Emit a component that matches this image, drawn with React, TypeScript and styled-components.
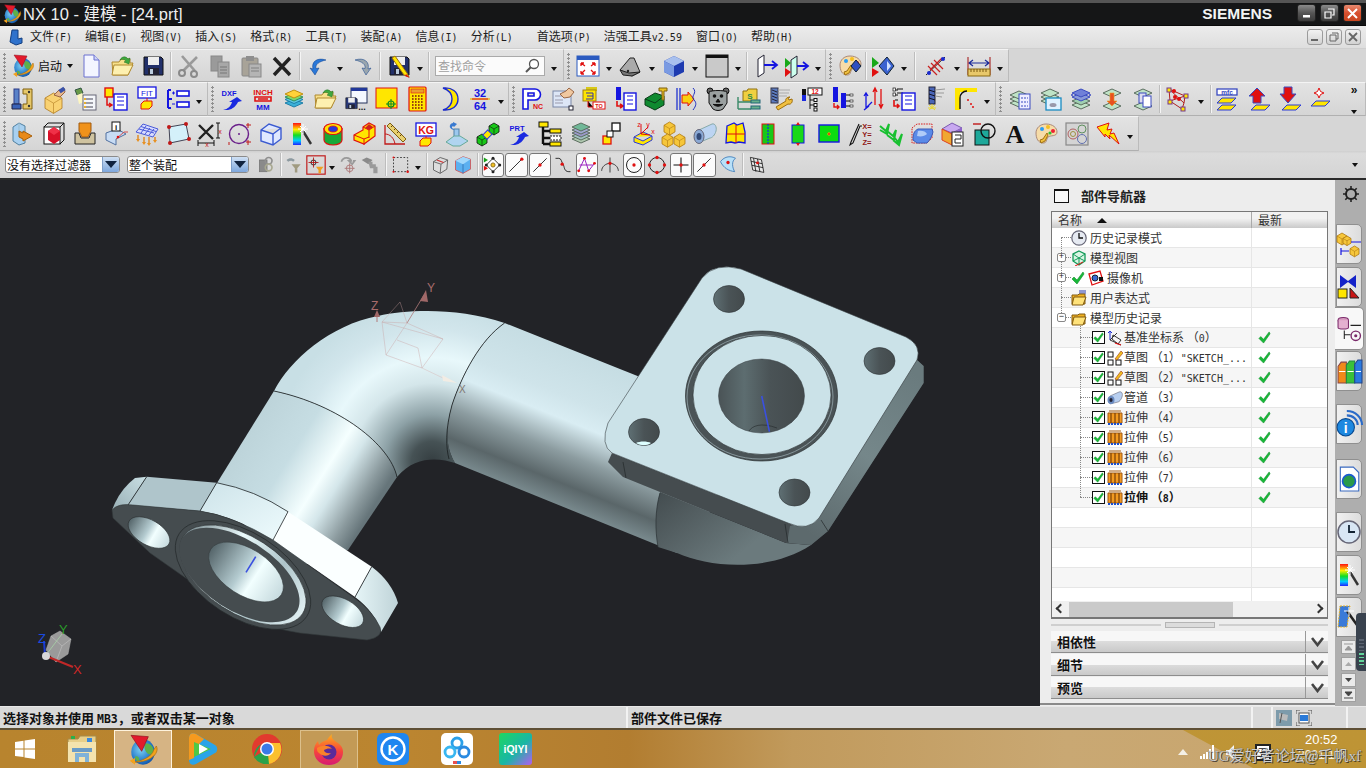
import React from 'react';
import styled, { createGlobalStyle } from 'styled-components';

const Global = createGlobalStyle`
  html, body { margin: 0; padding: 0; width: 1366px; height: 768px; overflow: hidden; background: #d8d8d8; }
  * { box-sizing: border-box; }
  #root { width: 1366px; height: 768px; }
`;
const CJK = `"Noto Sans CJK SC", "Liberation Sans", sans-serif`;

const Page = styled.div`
  width: 1366px; height: 768px; display: flex; flex-direction: column;
  font-family: ${CJK}; font-size: 12px; color: #222; overflow: hidden;
`;
/* ---------- title + menu ---------- */
const TitleBar = styled.header`
  height: 26px; flex: none; background: #151617; border-top: 3px solid #555;
  border-bottom: 1px solid #0a0a0a; display: flex; align-items: center; color: #eee; padding-left: 2px; position: relative;
`;
const TitleText = styled.span`
  font-family: "Liberation Sans", ${CJK}; font-size: 16.5px; margin-left: 1px; line-height: 22px; white-space: nowrap;
`;
const Siemens = styled.span`
  margin-left: auto; margin-right: 25px; font-family: "Liberation Sans", sans-serif; font-weight: 700; font-size: 15.5px;
  letter-spacing: 0; color: #f2f4f4;
`;
const WinBtn = styled.div<{ $red?: boolean }>`
  width: 19px; height: 18px; margin-right: 4px; margin-top: -2px; border-radius: 3px; border: 1px solid #222;
  background: ${p => p.$red ? 'linear-gradient(#e88a70,#d8502f 50%,#c9461f)' : 'linear-gradient(#8a8a8a,#555 50%,#3b3b3b)'};
  display: flex; align-items: center; justify-content: center;
`;
const MenuBar = styled.nav`
  height: 23px; flex: none; background: linear-gradient(#ececec,#dedede); display: flex; align-items: center;
  position: relative; padding-left: 30px; gap: 13px; border-bottom: 1px solid #cfcfcf;
`;
const MenuIconSlot = styled.span`
  position: absolute; left: 8px; top: 3px; display: flex;
`;
const MenuItem = styled.span<{ $after?: number }>`
  font-size: 12px; color: #1d1d1d; white-space: nowrap; margin-right: ${p => p.$after || 0}px; line-height: 20px;
`;
const Mono = styled.span`
  font-family: "DejaVu Sans Mono", "Liberation Mono", monospace; font-size: 10px;
`;
const StatusMono = styled.span`
  font-family: "DejaVu Sans Mono", "Liberation Mono", monospace; font-size: 11.5px;
`;
const DocBtns = styled.div`
  margin-left: auto; display: flex; gap: 3px; padding-right: 5px;
`;
const DocBtn = styled.div`
  width: 16px; height: 16px; border: 1px solid #9b9b9b; border-radius: 3px; background: linear-gradient(#f2f2f2,#d2d2d2);
  display: flex; align-items: center; justify-content: center;
`;
/* ---------- toolbars ---------- */
const ToolRow = styled.div<{ $h: number }>`
  height: ${p => p.$h}px; flex: none; display: flex; background: #d6d6d6;
`;
const Panel = styled.div<{ $grow?: boolean }>`
  display: flex; align-items: center; background: linear-gradient(#e3e3e3,#d5d5d5);
  border-top: 1px solid #f4f4f4; border-bottom: 1px solid #b0b0b0; border-right: 1px solid #bbb;
  flex: ${p => p.$grow ? 1 : 'none'};
`;
const Grip = styled.span<{ $w: number }>`
  width: ${p => p.$w}px; height: 26px; flex: none; margin-left: 0;
  background: radial-gradient(circle at 1.5px 1.5px, #8f8f8f 1px, transparent 1.2px) 3px 0 / 3px 4px repeat-y;
`;
const Cell = styled.span<{ $w: number }>`
  width: ${p => p.$w}px; height: 26px; flex: none; display: flex; align-items: center; justify-content: center;
`;
const BoxCell = styled(Cell)`
  height: 24px; margin: 0 .5px; width: ${p => p.$w - 1}px; background: #fbfbfb; border: 1px solid #777; border-radius: 3px;
`;
const Caret = styled.span<{ $w: number; $up?: number }>`
  width: ${p => p.$w}px; flex: none; display: flex; justify-content: center; align-self: center; position: relative; top: ${p => p.$up || 0}px;
  &::after { content: ''; border-left: 3.5px solid transparent; border-right: 3.5px solid transparent; border-top: 4px solid #111; }
`;
const Sep = styled.span<{ $w: number }>`
  width: ${p => p.$w}px; height: 28px; flex: none; display: flex; justify-content: center;
  &::after { content: ''; width: 2px; height: 100%; background: linear-gradient(90deg,#bdbdbd 50%,#f5f5f5 50%); }
`;
const StartLabel = styled.span`
  width: 27px; flex: none; font-size: 12px; color: #111; white-space: nowrap;
`;
const SearchBox = styled.div`
  width: 110px; height: 20px; margin: 0 3px; flex: none; background: #fbfbfb; border: 1px solid #aaa;
  display: flex; align-items: center; justify-content: space-between; padding: 0 4px 0 2px; color: #a0a0a0; font-size: 12px;
`;
const Overflow = styled.div`
  margin-left: auto; width: 22px; height: 30px; display: flex; flex-direction: column; align-items: center; justify-content: space-between;
  font-family: "Liberation Sans", sans-serif; font-weight: 700; font-size: 12px; line-height: 12px; color: #111;
`;
const SelBar = styled.div`
  height: 29px; flex: none; background: linear-gradient(#cfcfcf,#dcdcdc 10%,#d4d4d4); border-bottom: 2px solid #2a2a2a;
  display: flex; align-items: center; padding-left: 5px;
  ${Sep} { height: 23px; }
`;
const Drop = styled.div<{ $w: number }>`
  width: ${p => p.$w}px; height: 17px; flex: none; background: #fff; border: 1px solid #8b8b8b; border-radius: 3px;
  margin-right: 7px; display: flex; align-items: center; justify-content: space-between; font-size: 12px; color: #111; padding-left: 1px; overflow: hidden; white-space: nowrap;
`;
const DropArrow = styled.span`
  width: 17px; height: 15px; background: linear-gradient(#cfe0f4,#7ea7dc); border-left: 1px solid #7f9fc8; display: flex; align-items: center; justify-content: center;
  &::after { content: ''; border-left: 6px solid transparent; border-right: 6px solid transparent; border-top: 7px solid #10233f; }
`;
const SelEnd = styled.span`
  margin-left: auto; width: 14px; margin-right: 0; display: flex;
  &::after { content: ''; border-left: 3.5px solid transparent; border-right: 3.5px solid transparent; border-top: 4px solid #111; }
`;
/* ---------- main ---------- */
const Main = styled.main`
  height: 526px; flex: none; display: flex; background: #ededed;
`;
const Canvas = styled.section`
  width: 1040px; height: 526px; flex: none; background: #222327; overflow: hidden; display: flex;
`;
const SidePanel = styled.aside`
  width: 295px; flex: none; padding: 0 7px 0 11px; display: flex; flex-direction: column; background: #ededed; border-bottom: 2px solid #8a8a8a; margin-bottom: 1px;
`;
const PanelHead = styled.div`
  height: 31px; flex: none; display: flex; align-items: center; padding-left: 3px; font-weight: 700; font-size: 13px; color: #222;
  &::before { content: ''; width: 13px; height: 11px; border: 1.5px solid #111; border-top-width: 2px; background: #f8f8f8; margin-right: 12px; }
`;
const Table = styled.div`
  height: 408px; flex: none; border: 1px solid #777; border-bottom-width: 2px; display: flex; flex-direction: column; background: #fff; overflow: hidden;
`;
const THead = styled.div`
  height: 16px; flex: none; display: flex; background: linear-gradient(#f2f2f2 40%,#c9c9c9); font-size: 12px; color: #333; line-height: 16px;
`;
const ThName = styled.div`
  width: 200px; flex: none; padding-left: 6px; display: flex; align-items: center; border-right: 1px solid #aaa;
  &::after { content: ''; margin-left: 15px; border-left: 5px solid transparent; border-right: 5px solid transparent; border-bottom: 5px solid #111; }
`;
const ThLast = styled.div`
  padding-left: 6px;
`;
const Rows = styled.div`
  height: 373px; flex: none; overflow: hidden;
`;
const Row = styled.div<{ $alt: boolean }>`
  height: 20px; display: flex; background: ${p => p.$alt ? '#f6f6f6' : '#fff'}; border-bottom: 1px solid #e6e6e6;
`;
const NameCell = styled.div<{ $lvl: number }>`
  width: 200px; flex: none; border-right: 1px solid #e6e6e6; display: flex; align-items: center; gap: ${p => p.$lvl === 1 ? 1.5 : 3}px; position: relative;
  padding-left: ${p => p.$lvl === 1 ? 40 : 19}px; white-space: nowrap; color: #333; font-size: 12px; line-height: 19px;
`;
const VLine = styled.span<{ $l: number; $t: number; $b: number }>`
  position: absolute; left: ${p => p.$l}px; top: ${p => p.$t}px; bottom: ${p => p.$b}px; border-left: 1px dotted #888;
`;
const HLine = styled.span<{ $l: number; $w: number }>`
  position: absolute; left: ${p => p.$l}px; top: 9px; width: ${p => p.$w}px; border-top: 1px dotted #888;
`;
const Expander = styled.span`
  position: absolute; left: 5px; top: 5px; width: 9px; height: 9px; border: 1px solid #888; border-radius: 2px; background: #fff;
  display: flex; align-items: center; justify-content: center; font: 400 9px/7px "Liberation Mono", monospace; color: #222;
`;
const LatestCell = styled.div`
  padding-left: 6px; display: flex; align-items: center;
`;
const RowText = styled.span<{ $bold?: boolean }>`
  font-weight: ${p => p.$bold ? 700 : 400}; color: ${p => p.$bold ? '#111' : '#333'};
`;
const HScroll = styled.div`
  height: 16px; flex: none; display: flex; align-items: center; background: #f0f0f0; padding-left: 17px; position: relative;
`;
const ScrollThumb = styled.div`
  width: 164px; height: 15px; background: #cacaca;
`;
const ScrollArrow = styled.span<{ $side: 'l' | 'r' }>`
  position: absolute; ${p => p.$side === 'l' ? 'left: 5px;' : 'right: 5px;'} top: 4px; width: 7px; height: 7px;
  border-left: 2px solid #333; border-bottom: 2px solid #333; transform: rotate(${p => p.$side === 'l' ? 45 : 225}deg);
`;
const Sash = styled.div`
  height: 11px; flex: none; display: flex; align-items: center; justify-content: center; gap: 4px;
  &::before, &::after { content: ''; flex: 1; height: 2px; background: #cfcfcf; }
`;
const SashHandle = styled.span`
  width: 50px; height: 6px; background: #dcdcdc; border: 1px solid #b5b5b5;
`;
const Accordion = styled.div`
  display: flex; flex-direction: column; gap: 1px; margin-top: 1px;
`;
const AccBar = styled.div`
  height: 22px; display: flex; align-items: center; justify-content: space-between; padding-left: 6px; font-weight: 700; font-size: 13px; color: #111;
  background: linear-gradient(#f7f7f7 50%,#dcdcdc 50%,#c9c9c9); border-bottom: 1px solid #8d8d8d; text-shadow: 0 0 1px #fff;
`;
const AccChevron = styled.span`
  width: 23px; height: 100%; border-left: 1px solid #999; display: flex; align-items: center; justify-content: center;
`;
const TabRail = styled.div`
  width: 31px; flex: none; background: #aeaeae; display: flex; flex-direction: column; align-items: flex-start; padding-left: 1px; position: relative; border-bottom: 2px solid #aeaeae;
`;
const GearSlot = styled.div`
  height: 27px; width: 30px; margin-top: 0; display: flex; align-items: center; justify-content: center;
`;
const Tab = styled.div<{ $top: number; $active?: boolean; $h?: number }>`
  width: ${p => p.$active ? 29 : 26}px; height: ${p => p.$h || 40}px; margin-top: ${p => p.$top}px; flex: none;
  background: ${p => p.$active ? '#f8f8f8' : 'linear-gradient(90deg,#f0f0f0,#dcdcdc)'};
  border: 1px solid #8f8f8f; border-left: ${p => p.$active ? 'none' : '1px solid #8f8f8f'}; border-radius: 0 5px 5px 0;
  display: flex; align-items: center; justify-content: center; margin-left: ${p => p.$active ? -1 : 0}px;
`;
const RailBtn = styled.div<{ $top: number }>`
  width: 15px; height: 14px; margin-left: 5px; margin-top: ${p => p.$top}px; background: #eaeaea; border: 1px solid #a0a0a0; flex: none;
  display: flex; align-items: center; justify-content: center;
`;
const Meter = styled.div`
  position: absolute; right: 0; top: 433px; width: 10px; height: 58px; background: #39424e; border-radius: 4px 0 0 4px;
  display: flex; flex-direction: column; justify-content: flex-end; gap: 2px; padding: 0 2px 6px 3px;
`;
const MeterTick = styled.span<{ $on: boolean }>`
  height: 1.5px; background: ${p => p.$on ? '#63d49b' : '#5a6370'};
`;
/* ---------- status / taskbar ---------- */
const StatusBar = styled.footer`
  height: 22px; flex: none; background: #d9d9d9; border-top: 1px solid #e8e8e8; display: flex; align-items: center; font-size: 13px; font-weight: 700; color: #111;
`;
const StatusCell = styled.div<{ $w: number; $line?: boolean }>`
  width: ${p => p.$w}px; height: 100%; flex: none; display: flex; align-items: center; gap: 4px; padding-left: 3px;
  border-right: ${p => p.$line ? '2px solid #f2f2f2' : 'none'}; white-space: pre;
`;
const StatusMsg = styled.span`
  white-space: pre;
`;
const Taskbar = styled.div`
  height: 40px; flex: none; display: flex; position: relative; border-top: 2px solid #5e4f35;
  background: linear-gradient(90deg,#b8842e 0,#bb8530 30%,#b27d30 46%,#c19a5c 58%,#c9a873 78%,#c8a56c 100%);
  &::after { content: ''; position: absolute; inset: 0; background: linear-gradient(90deg,#c19a3e,#be9435);
    clip-path: polygon(1183px 0,100% 0,100% 100%,1253px 100%); }
`;
const TaskCell = styled.div<{ $w: number; $on?: 'a' | 'b' }>`
  width: ${p => p.$w}px; flex: none; display: flex; align-items: center; justify-content: center; position: relative; z-index: 1;
  ${p => p.$on === 'a' ? 'background:#d6b484;border:1px solid #fff3dd;border-bottom:none;' : ''}
  ${p => p.$on === 'b' ? 'background:#c39a56;border:1px solid #dcc08c;border-bottom:none;' : ''}
`;
const Tray = styled.div`
  margin-left: auto; width: 190px; position: relative; z-index: 2; display: flex; align-items: center; gap: 10px; padding-left: 2px; padding-top: 6px;
`;
const Clock = styled.div`
  position: absolute; left: 129px; top: 2px; color: #fff; font: 13px/15px "Liberation Sans", sans-serif; white-space: nowrap;
`;
const DateText = styled.div`
  position: absolute; left: 122px; top: 18px; color: #f4f0e0; font: 12px/15px "Liberation Sans", sans-serif; white-space: nowrap;
`;
const Watermark = styled.div`
  position: absolute; left: 32px; top: 16px; color: rgba(235,235,235,.85); font: 15px/20px "Liberation Serif", "Noto Sans CJK SC", serif; white-space: nowrap;
  text-shadow: 0 0 1px #333, 1px 1px 0 rgba(40,40,40,.75);
`;
const ImeBox = styled.span`
  width: 16px; height: 17px; background: #fff; border: 2px solid #222; font-size: 11px; line-height: 13px; text-align: center; color: #111; margin-left: 9px;
`;
const ToolSvg = styled.svg<{ $s: number }>`
  width: ${p => p.$s}px; height: ${p => p.$s}px; flex: none; display: block; overflow: visible;
`;
const T: React.FC<{ x: number; y: number; s: number; f: string; w?: number; a?: 'start' | 'middle'; children: React.ReactNode }> = ({ x, y, s, f, w = 700, a = 'middle', children }) => (
  <text x={x} y={y} fontSize={s} fill={f} fontWeight={w} textAnchor={a} fontFamily='"Liberation Sans",sans-serif'>{children}</text>
);

/* ---------- icon pieces ---------- */
const B = '#1515e0', R = '#e01010', Y = '#ffe600', G = '#10c010';
const Fold = (
  <><path d="M2 8h7l2-3h9v4h3l-5 12H3z" fill="#f7e08a" stroke="#b08a30" /><path d="M4 11h19l-5 10H2z" fill="#fdf0b0" stroke="#b08a30" /></>
);
const Floppy = (f = '#22306a') => (
  <><path d="M3 3h17l2 2v16H3z" fill={f} stroke="#111" /><rect x="7" y="3" width="11" height="8" fill="#eee" /><rect x="7" y="14" width="11" height="7" fill="#223" /><rect x="9" y="15" width="3" height="5" fill="#bcd" /></>
);
const Lyr = (y: number, f = '#bfe3c6', st = '#5c6e60') => <path d={`M12 ${y}l9 4-9 4-9-4z`} fill={f} stroke={st} />;
const ListBox = (x: number, y: number, w = 12, h = 14) => (
  <><rect x={x} y={y} width={w} height={h} fill="#fff" stroke={B} strokeWidth="1.4" /><path d={`M${x + 3} ${y + 3}h${w - 6}M${x + 3} ${y + 7}h${w - 6}M${x + 3} ${y + 11}h${w - 6}`} stroke={B} /></>
);
const Para = (x: number, y: number) => <path d={`M${x + 5} ${y}h14l-5 5h-14z`} fill={Y} stroke="#2a3ad8" />;
const Cube = (x: number, y: number, s: number, c = '#f6c63a', st = '#b07a10') => (
  <><path d={`M${x} ${y + s * .3}l${s * .5} -${s * .3} ${s * .5} ${s * .3} v${s * .6} l-${s * .5} ${s * .3} -${s * .5} -${s * .3}z`} fill={c} stroke={st} strokeWidth=".8" /><path d={`M${x} ${y + s * .3}l${s * .5} ${s * .3} ${s * .5} -${s * .3}M${x + s * .5} ${y + s * .6}v${s * .6}`} stroke={st} strokeWidth=".6" fill="none" /></>
);
const Wand = (
  <><defs><linearGradient id="rb" x1="0" y1="0" x2="0" y2="1"><stop offset="0" stopColor="#f11" /><stop offset=".3" stopColor="#fe0" /><stop offset=".55" stopColor="#1d2" /><stop offset=".8" stopColor="#0cf" /><stop offset="1" stopColor="#22f" /></linearGradient></defs><rect x="3" y="1" width="8" height="22" fill="url(#rb)" /><path d="M13 9l8 13" stroke="#333" strokeWidth="2.4" /><path d="M13 2v10M8 7h10M10 4l6 6M16 4l-6 6" stroke="#fff" strokeWidth="1" /></>
);
const Palette = (
  <><path d="M12 2c7 0 11 4 11 8 0 5-7 3-9 5-2 3-1 6-5 6-5 0-7-5-7-10C2 6 6 2 12 2z" fill="#f6dca8" stroke="#a87" /><circle cx="8" cy="7" r="2" fill="#2a9df4" /><circle cx="14" cy="5" r="2" fill="#f6c020" /><circle cx="19" cy="9" r="2" fill="#e23" /><circle cx="16" cy="11" r="1.6" fill="#3b3" /><path d="M13 11l-4 6-3 1 1 3 4-2 3-6z" fill="#f0c040" stroke="#a07010" /></>
);
const Globe = (
  <><defs><radialGradient id="gb" cx=".4" cy=".4" r=".7"><stop offset="0" stopColor="#7fd2f2" /><stop offset=".7" stopColor="#1f74c8" /><stop offset="1" stopColor="#124a9a" /></radialGradient></defs><ellipse cx="12" cy="13.5" rx="8.8" ry="9.5" fill="url(#gb)" /><path d="M14 7c4 0 6 3 6 6s-2 3-4 2-4-5-2-8zM6 17c2-1 4 1 3 4-2-1-3-2-3-4z" fill="#5db04a" /><path d="M3 1l13 1-5 11z" fill="#e21a2c" stroke="#8c0f1c" strokeWidth=".5" /><path d="M22 9c3 6-6 13-18 12 6 0 15-4 16-9z" fill="#f2a21c" stroke="#a86a10" strokeWidth=".5" /><path d="M2 20l4-2v5z" fill="#f2a21c" /></>
);
const Wing = (c = '#1a6ad0') => <path d="M19 6C10 3 4 8 6 15l-3-1 5 7 4-7-3 .5c-1-4 3-7 10-8.500z" fill={c} stroke="#0c3d88" strokeWidth=".5" />;

const ICONS: Record<string, React.ReactNode> = {
  logo: Globe,
  new: <><path d="M5 1h10l5 5v17H5z" fill="#f3f5ff" stroke="#6a70d0" /><path d="M15 1v5h5" fill="#cdd3f6" stroke="#6a70d0" /></>,
  open: <>{Fold}<path d="M10 6c2-4 6-4 8-1l2-1-1 6-5-2 2-1c-2-2-4-2-6-1z" fill="#3fa83f" stroke="#1e6e1e" strokeWidth=".5" /></>,
  save: Floppy(),
  cut: <><path d="M6 17L20 3M18 17L5 2" stroke="#9a9a9a" strokeWidth="2.6" /><circle cx="5" cy="19" r="3" fill="none" stroke="#8a8a8a" strokeWidth="2" /><circle cx="17" cy="20" r="3" fill="none" stroke="#8a8a8a" strokeWidth="2" /></>,
  copy: <><rect x="3" y="2" width="11" height="15" fill="#9a9a9a" stroke="#888" /><rect x="10" y="8" width="11" height="15" fill="#a8a8a8" stroke="#888" /><path d="M12 13h7M12 16h7M12 19h7" stroke="#777" /></>,
  paste: <><rect x="3" y="4" width="16" height="18" rx="1" fill="#a8a398" stroke="#888" /><rect x="7" y="2" width="8" height="5" fill="#8e8e8e" /><rect x="10" y="10" width="12" height="13" fill="#b4b4b4" stroke="#888" /><path d="M12 14h8M12 17h8" stroke="#808080" /></>,
  del: <path d="M4 4l16 17M20 4L4 21" stroke="#222" strokeWidth="3.4" />,
  undo: Wing('#2a78d8'),
  redo: <g transform="matrix(-1 0 0 1 24 0)">{Wing('#9aa6ae')}</g>,
  savePen: <>{Floppy()}<path d="M8 2l12 17 2 4-5-2L5 4z" fill={Y} stroke="#a07010" /><path d="M19 20l4 4-5-2z" fill="#e01010" /></>,
  fit: <><rect x="1" y="2" width="22" height="20" fill="#fff" stroke="#2a5ac0" /><rect x="1" y="2" width="22" height="4" fill="#2a5ac0" /><path d="M5 9l4 3M5 9v3M5 9h3M19 9l-4 3M19 9v3M19 9h-3M5 20l4-4M5 20v-3M5 20h3M19 20l-4-4M19 20v-3M19 20h-3" stroke={R} strokeWidth="1.3" fill="none" /></>,
  shape: <><path d="M2 16l10-12h4l6 14-8 4z" fill="#aaa" stroke="#222" /><path d="M2 16l9 3 11-1-8 4-9-1z" fill="#777" stroke="#222" /><circle cx="10" cy="17" r="1.2" fill="#222" /></>,
  cube: <><path d="M2 7l10-5 10 5v11l-10 5-10-5z" fill="#1e3bb0" /><path d="M2 7l10-5 10 5-10 5z" fill="#a8c0ee" /><path d="M2 7l10 5v11l-10-5z" fill="#7a9ae2" /></>,
  square: <><rect x="1" y="1" width="22" height="22" fill="#c9c9c9" stroke="#111" /><rect x="1" y="1" width="22" height="3" fill="#111" /></>,
  slab: <><path d="M4 5l6-4v18l-6 4z" fill="#fff" stroke="#223" /><path d="M10 11h12M18 7l5 4-5 4" stroke={B} strokeWidth="1.8" fill="none" /></>,
  slab2: <><path d="M6 6l6-4v18l-6 4z" fill="#cfe" stroke="#223" /><path d="M0 4l6 5-6 5z" fill="#18a818" /><path d="M0 14l6 4-6 5z" fill={R} /><path d="M12 12h10M18 8l5 4-5 4" stroke={B} strokeWidth="1.8" fill="none" /></>,
  palDia: <>{Palette}<path d="M18 6l5 6-5 6-5-6z" fill="#3050c0" stroke="#123" /></>,
  triDia: <><path d="M1 3l7 6-7 5z" fill="#18a818" /><path d="M1 14l7 4-7 5z" fill={R} /><path d="M16 3l7 9-7 9-8-9z" fill="#3a62d0" stroke="#123" /><path d="M16 7l4 5-4 5z" fill="#cfe0ff" /></>,
  antenna: <><path d="M2 21L21 3" stroke="#222" /><path d="M4 12l9 9M7 9l9 9M10 6l9 9M6 16l12-12" stroke="#c82020" strokeWidth="1.2" /><circle cx="5" cy="19" r="2" fill="#1a2ad0" /><circle cx="19" cy="5" r="2" fill="#1a2ad0" /></>,
  rulerDim: <><path d="M2 9h20M6 6l-4 3 4 3M18 6l4 3-4 3" stroke="#1a2a9a" strokeWidth="1.2" fill="none" /><path d="M1 3v18M23 3v18" stroke="#a01010" /><rect x="1" y="15" width="22" height="7" fill="#e8c86a" stroke="#8a6a10" /><path d="M4 15v3M7 15v3M10 15v3M13 15v3M16 15v3M19 15v3" stroke="#7a5a10" /></>,
  bolt: <><rect x="3" y="2" width="5" height="15" fill="#5a82c8" stroke="#2a3a88" /><path d="M1 17h9v5H1z" fill="#3a62b8" stroke="#224" /><path d="M12 2h9v20h-9v-5h4V7h-4z" fill="#e6c86a" stroke="#806010" /><circle cx="18" cy="5" r="1.2" fill="#333" /><circle cx="18" cy="19" r="1.2" fill="#333" /></>,
  handBox: <>{Cube(3, 6, 17, '#f9d272', '#b07a20')}<path d="M12 8l5-5 3 1 2-3 1 4-5 5z" fill="#e9b98a" stroke="#964" /><rect x="17" y="1" width="6" height="4" fill="#3a52a8" transform="rotate(-35 20 3)" /></>,
  spot: <><path d="M2 3l6-2 2 5-6 2z" fill="#689a48" stroke="#354" /><path d="M4 8l5-2 5 8-8 3z" fill="#fff8c0" opacity=".95" /><rect x="10" y="8" width="13" height="15" fill="#f4f6fa" stroke="#667" /><path d="M13 12h7M13 16h7M13 20h7" stroke="#445" strokeWidth="1.2" /><rect x="11" y="11" width="2" height="2" fill="#e8b030" /><rect x="11" y="15" width="2" height="2" fill="#e8b030" /><rect x="11" y="19" width="2" height="2" fill="#e8b030" /></>,
  redList: <><rect x="1" y="1" width="8" height="9" fill={Y} stroke={R} strokeWidth="1.4" /><path d="M3 10v8h4M5 16l3 2-3 2" stroke={R} strokeWidth="1.5" fill="none" />{ListBox(10, 7, 13, 16)}</>,
  fitBox: <><rect x="3" y="0" width="18" height="11" fill="#fff" stroke={B} strokeWidth="1.3" /><T x={12} y={9} s={8} f={B} w={400}>FIT</T><path d="M12 11v4" stroke={R} /><path d="M6 17l3-3h8v5l-3 3H6z" fill={Y} stroke={R} /></>,
  listPM: <><path d="M2 3v18M2 3h3M2 21h3M2 12h4" stroke={B} strokeWidth="2" /><path d="M6 6h3M7.500 4.500v3M6 17h3" stroke={B} /><rect x="11" y="4" width="12" height="5" fill="#fff" stroke={B} strokeWidth="1.6" /><rect x="11" y="15" width="12" height="5" fill="#fff" stroke={B} strokeWidth="1.6" /></>,
  dxf: <><T x={9} y={9} s={7.500} f={B}>DXF</T><path d="M3 23c5-1 8-4 9-8l-3 0 8-5 5 4-4 1c-2 4-5 7-10 8z" fill="#1a2ae0" /></>,
  inch: <><T x={12} y={7.500} s={8} f={R}>INCH</T><path d="M4 10h16v4H4zM7 12h10" fill="none" stroke={R} strokeWidth="1.6" /><T x={12} y={23} s={8} f={B}>MM</T></>,
  layersY: <>{Lyr(12, '#3ab0d8', '#1e7ea8')}{Lyr(8.500, '#5ec8e0', '#1e7ea8')}{Lyr(6, '#7fd86a', '#2f8f60')}{Lyr(3, '#ffd23a', '#c09010')}</>,
  saveWin: <><rect x="7" y="1" width="16" height="15" fill="#f4f8ff" stroke="#22305a" /><rect x="7" y="1" width="16" height="3" fill="#22389a" /><g transform="translate(0 9) scale(.6)">{Floppy('#2a3a7a')}</g><T x={18} y={23} s={9} f="#111">...</T></>,
  yellowSq: <><rect x="1" y="1" width="21" height="20" fill={Y} stroke={R} /><circle cx="16" cy="17" r="3" fill="none" stroke="#0a8a20" strokeWidth="1.2" /><path d="M16 12v10M11 17h10" stroke="#0a8a20" /></>,
  calc: <><rect x="3" y="0" width="17" height="24" rx="1" fill={Y} stroke={R} strokeWidth="1.2" /><rect x="5" y="2" width="13" height="4" fill="#e8a030" stroke={R} strokeWidth=".6" /><path d="M6 9h11M6 12h11M6 15h11M6 18h11M6 21h11" stroke="#7a1010" strokeWidth="1.5" strokeDasharray="1.6 1.4" /></>,
  moon: <path d="M6 1c6 2 9 6 9 11s-3 9-9 11c9 1 15-4 15-11S15 0 6 1z" fill={Y} stroke="#1a2ad0" strokeWidth="1.4" />,
  frac: <><T x={12} y={9.500} s={11} f={B}>32</T><path d="M2 12h20" stroke="#e8c020" strokeWidth="1.5" /><path d="M4 12h16" stroke={R} /><T x={12} y={23} s={11} f={B}>64</T></>,
  pnc: <><path d="M3 2h12a5 5 0 010 11H8v9H3zM8 6v3h6v-3z" fill="#fff" stroke={B} strokeWidth="1.6" /><T x={18} y={22} s={7} f={R}>NC</T></>,
  handDoc: <><rect x="2" y="4" width="18" height="16" fill="#dde6f6" stroke="#7a88a8" /><path d="M4 9h14M4 13h8M4 16h8" stroke="#99a" /><path d="M9 7l6-3 3-3 5 4-4 5-6 1z" fill="#f0c8a0" stroke="#964" /><rect x="18" y="19" width="4" height="4" fill="#fff" stroke="#223" /></>,
  yellowTo: <><rect x="4" y="0" width="11" height="4" fill="#d8c818" /><rect x="1" y="3" width="13" height="11" fill={Y} stroke="#a08010" /><path d="M4 6h7v6H4M5 9h6" stroke="#33a" fill="none" /><path d="M6 14v6h5" stroke={R} /><rect x="11" y="15" width="12" height="7" fill="#fff" stroke={R} /><T x={17} y={21} s={5.500} f={R}>TO</T></>,
  redBlueList: <><rect x="3" y="0" width="5" height="13" fill={B} /><path d="M4 14v5h5M7 17l3 2-3 2" stroke={R} strokeWidth="1.6" fill="none" />{ListBox(11, 6, 12, 17)}</>,
  greenBlock: <><path d="M1 12l10-6 9 3v9l-9 5-10-5z" fill="#0f8a30" stroke="#0a3a18" /><path d="M1 12l10 4 9-7" stroke="#0a3a18" fill="none" /><path d="M15 1h8v3h-3v9h-2V4h-3z" fill="#e8c020" stroke="#806010" /></>,
  wave: <><path d="M2 1v22M5 1v22" stroke="#3040d0" strokeWidth="1.4" /><path d="M7 8h6V5l6 7-6 7v-3H7z" fill="#f8d010" stroke={R} /><path d="M18 1c5 5-3 8 1 12 3 3 2 6-1 10" stroke="#2030c0" fill="none" /></>,
  bear: <><circle cx="4" cy="4" r="3" fill="#666" stroke="#111" /><circle cx="20" cy="4" r="3" fill="#666" stroke="#111" /><path d="M3 5c3-2 15-2 18 0v11l-4 6c-3 2-7 2-10 0l-4-6z" fill="#9aa0a0" stroke="#111" /><circle cx="8.500" cy="9" r="1.800" fill="#111" /><circle cx="15.500" cy="9" r="1.800" fill="#111" /><path d="M12 12l-2 3h4zM7 17c3 3 7 3 10 0" fill="#111" stroke="#111" /></>,
  folderTree: <><path d="M6 4h4l1-2h9v12H6z" fill="#f0d040" stroke="#907010" /><T x={13} y={12} s={8} f="#2a8a4a">S</T><path d="M1 10v12M1 15h13M1 22h13" stroke="#3a8a68" strokeWidth="1.4" /><rect x="14" y="13" width="9" height="3" fill="#66b08a" stroke="#267" /><rect x="14" y="19" width="9" height="3" fill="#66b08a" stroke="#267" /></>,
  wrench: <><rect x="3" y="1" width="7" height="15" fill="#5c7cc0" stroke="#334" /><path d="M4 3l5 2M4 6l5 2M4 9l5 2M4 12l5 2" stroke="#223" /><path d="M10 3h12M10 6h11M10 9h9" stroke="#aaa" /><path d="M22 10c-3 0-5 2-4 4l-10 6 2 3 10-6c3 1 5-2 4-5l-3 1-1-2z" fill="#f0c040" stroke="#a07010" /></>,
  tree12: <><rect x="3" y="2" width="4" height="12" fill="#111" /><rect x="3" y="8" width="4" height="6" fill="#1c2ae0" /><rect x="9" y="1" width="14" height="7" fill="#fff" stroke="#111" /><T x={16} y={7} s={6.500} f={R}>12</T><path d="M11 8v14M11 13h4M11 18h4" stroke="#111" /><rect x="15" y="11.500" width="3" height="3" fill="#fff" stroke="#111" /><rect x="15" y="16.500" width="3" height="3" fill="#fff" stroke="#111" /><rect x="15" y="21" width="3" height="3" fill="#fff" stroke="#111" /></>,
  blueBars: <><rect x="3" y="0" width="5" height="15" fill={B} /><rect x="11" y="6" width="5" height="15" fill={B} /><path d="M4 16v4h5M7 18l2 2-2 2" stroke={R} strokeWidth="1.400" fill="none" /><path d="M16 8h4M16 14h4M16 19h4" stroke="#111" /><rect x="20" y="7" width="3" height="2" fill="#fff" stroke="#111" strokeWidth=".6" /><rect x="20" y="13" width="3" height="2" fill="#fff" stroke="#111" strokeWidth=".6" /><rect x="20" y="18" width="3" height="2" fill="#fff" stroke="#111" strokeWidth=".6" /></>,
  xyArrows: <><path d="M5 21V7M3 9l2-3 2 3M5 21l6-6M3 23l5-4" stroke={B} strokeWidth="1.300" fill="none" /><path d="M14 2v16M12 5l2-4 2 4M20 2v18M18 17l2 4 2-4" stroke={R} strokeWidth="1.300" fill="none" /></>,
  listRed: <><path d="M3 3h3M3 8h3M3 13h3" stroke="#111" strokeWidth="1" /><rect x="1" y="1" width="2.500" height="3" fill="#fff" stroke="#111" strokeWidth=".7" /><rect x="1" y="6" width="2.500" height="3" fill="#fff" stroke="#111" strokeWidth=".7" /><path d="M5 6h6M5 2h6" stroke="#111" /><path d="M2 13v6h5M5 17l2 2-2 2" stroke={R} strokeWidth="1.600" fill="none" />{ListBox(10, 6, 13, 17)}</>,
  drill: <><rect x="6" y="0" width="6" height="17" fill="#4a66b8" stroke="#223" /><path d="M6 3l6 2M6 7l6 2M6 11l6 2" stroke="#112" /><path d="M12 3l10-1M12 6l9 0M12 9l7 1" stroke="#999" /><path d="M9 17v5M5 21h8M6 18l6 5M12 18l-6 5" stroke="#e8d830" /></>,
  yArc: <><path d="M1 1h22v4H6v18H1z" fill={Y} /><path d="M6 22V11c0-4 3-7 7-7" stroke="#111" strokeWidth="1.4" fill="none" /><circle cx="14" cy="13" r="1" fill={R} /><circle cx="17" cy="17" r="1" fill={R} /><circle cx="19" cy="20" r="1" fill={R} /></>,
  lyrList: <>{Lyr(12)}{Lyr(8)}{Lyr(4)}<rect x="12" y="7" width="11" height="15" fill="#eef" stroke="#3a4ac0" /><path d="M14 11h7M14 15h7M14 19h7" stroke="#3a4ac0" strokeDasharray="2 1" /></>,
  lyrView: <>{Lyr(10)}{Lyr(6)}{Lyr(2)}<rect x="8" y="11" width="15" height="12" fill="#dff2ff" stroke="#1a8ac0" strokeWidth="1.300" /><ellipse cx="15" cy="18" rx="3.500" ry="2" fill="#99a" /></>,
  lyrStack: <>{Lyr(14)}{Lyr(10, '#9fd0b0')}{Lyr(6, '#8a9ad8', '#3a4ac0')}{Lyr(2, '#7080d8', '#3a4ac0')}<circle cx="3" cy="8" r="1" fill="#3a4ac0" /><circle cx="21" cy="8" r="1" fill="#3a4ac0" /></>,
  lyrArrow: <>{Lyr(2)}{Lyr(15)}<path d="M10 6h4v8h3l-5 5-5-5h3z" fill="#e85020" stroke="#e8a020" strokeWidth=".6" /></>,
  lyrDoc: <>{Lyr(2)}{Lyr(15)}<rect x="8" y="6" width="7" height="10" fill="#dde" stroke="#3a4ac0" /><rect x="12" y="9" width="8" height="11" fill="#fff" stroke="#3a4ac0" /></>,
  poly: <><path d="M3 2l15 14-2 6L4 14zM3 2l16 7-1 7M4 14l15-5" stroke="#b02020" fill="none" /><rect x="1" y="1" width="4" height="4" fill={Y} stroke="#74378a" /><rect x="18" y="7" width="4" height="4" fill={Y} stroke="#74378a" /><rect x="2" y="13" width="4" height="4" fill={Y} stroke="#74378a" /><rect x="15" y="20" width="4" height="4" fill={Y} stroke="#74378a" /><circle cx="8" cy="4" r="2" fill={R} /><circle cx="13" cy="12" r="2" fill={R} /><circle cx="9" cy="10" r="2" fill={R} /></>,
  mfc: <><rect x="1" y="2" width="20" height="6" fill="#fff" stroke="#3a4ac0" strokeWidth="1.300" /><T x={11} y={7.500} s={6.500} f="#3a4ac0">mfc</T>{Para(1, 11)}{Para(1, 18)}</>,
  up: <><path d="M10 1l8 8h-4v7H6V9H2z" fill={R} stroke="#3a4ac0" />{Para(4, 18)}</>,
  down: <><path d="M6 0h8v7h4l-8 9-8-9h4z" fill={R} stroke="#3a4ac0" />{Para(4, 18)}</>,
  star: <><path d="M10 1l1.500 3.500L15 6l-3.500 1.500L10 11 8.500 7.500 5 6l3.500-1.500z" fill="#fff" stroke={R} />{Para(2, 14)}</>,
  box: <><path d="M3 5l6-4 6 3v17l-6 2-6-4z" fill="#a8d0f0" stroke="#5080a0" /><path d="M9 1v13l6 4" fill="none" stroke="#9bc" /><path d="M9 9l4 2 0-2 9 5-9 5v-2l-4-2z" fill="#e88a1a" stroke="#a8600a" /></>,
  redCube: <><rect x="2" y="5" width="16" height="17" fill="#fff" stroke="#111" /><path d="M2 5l4-4h16v17l-4 4M18 5l4-4" fill="none" stroke="#111" /><path d="M6 9l6-4 6 4v9l-6 4-6-4z" fill="#d81028" /><path d="M6 9l6 4 6-4-6-4z" fill="#f03048" /></>,
  tray: <><path d="M6 1h12v8l-3 6H9L6 9z" fill="#f0921a" stroke="#a05a10" /><path d="M2 11h4l2 5h8l2-5h4v11H2z" fill="#cfc3a0" stroke="#222" /></>,
  info: <><path d="M2 11l11-4 9 5-10 5v6l-10-5z" fill="#c8dcf4" stroke="#5070a0" /><rect x="8" y="0" width="8" height="9" fill="#fff" stroke="#111" /><T x={12} y={8} s={8} f="#111">i</T><path d="M12 17l8-7h4" stroke="#d05050" fill="none" /><circle cx="14" cy="15" r="1.300" fill={R} /></>,
  net: <><path d="M1 10l7-8 15 5-5 8z" fill="#d8dcff" stroke="#4a5ad8" /><path d="M4 7l15 4M6 4.500l15 5M6 11l5-7M10 12l5-6M14 13l5-6" stroke="#4a5ad8" /><path d="M3 13v5M9 15v6M14 15v7M20 15v4" stroke="#e08010" strokeWidth="1.300" /><path d="M1 17h4l-2 3zM7 20h4l-2 3zM12 21h4l-2 3zM18 18h4l-2 3z" fill="#e89020" /></>,
  plate: <><path d="M3 5l17-3 3 15-19 4z" fill="#d4f0fa" stroke="#445" /><circle cx="3" cy="5" r="2" fill="#c01818" /><circle cx="20" cy="2" r="2" fill="#c01818" /><circle cx="23" cy="17" r="2" fill="#c01818" /><circle cx="4" cy="21" r="2" fill="#c01818" /></>,
  xDim: <><path d="M2 3l14 14M16 3L2 17" stroke="#222" strokeWidth="2.400" /><path d="M1 21h16M1 18v6M17 18v6M19 1h4M21 1v15M19 16h4" stroke="#111" /><T x={10} y={25} s={7} f="#c81818" w={400}>x</T><T x={23} y={12} s={7} f="#c81818" w={400}>x</T></>,
  circ: <><circle cx="11" cy="12" r="9.500" fill="none" stroke="#6a1f8a" strokeWidth="1.400" /><circle cx="11" cy="12" r="1" fill="#6a1f8a" /><path d="M20 1v5M18 3h5M20 18v5M18 20h5M1 20v3" stroke="#c01818" /></>,
  wire: <><path d="M2 8l8-6 12 4v11l-8 6-12-4zM2 8l12 4 8-6M14 12v11" fill="#dfe8ff" stroke="#3a5ad0" strokeWidth="1.400" /></>,
  wand: Wand,
  cyl: <><path d="M3 6v12c0 3 4 5 9 5s9-2 9-5V6" fill="#18a838" stroke={R} strokeWidth="1.200" /><ellipse cx="12" cy="7" rx="9" ry="5.500" fill={Y} stroke={R} strokeWidth="1.200" /><ellipse cx="12" cy="7" rx="4.500" ry="3" fill="#2a3ad8" stroke={R} strokeWidth=".8" /></>,
  step: <><path d="M2 13l9-5v-3l6-4 6 3v10l-11 8-10-4z" fill={Y} stroke={R} strokeWidth="1.200" /><path d="M11 5l6 3 6-4M17 8v8M2 13l10 4v6M12 17l5-2" fill="none" stroke={R} /><path d="M13 6l4 2 4-3-4-3z" fill="#d02020" /></>,
  rulerA: <><path d="M2 3v19h20" stroke="#c01818" strokeWidth="1.300" fill="none" /><path d="M2 12c5 0 9 4 10 10" stroke="#c01818" fill="none" /><path d="M7 1l16 16-3 3L4 4z" fill="#e8d070" stroke="#806010" /><path d="M8 5l2-2M11 8l2-2M14 11l2-2M17 14l2-2" stroke="#604010" /></>,
  kg: <><rect x="2" y="1" width="20" height="13" fill="#fff" stroke={B} strokeWidth="1.300" /><T x={12} y={11.500} s={10.500} f={R}>KG</T><path d="M12 14v3" stroke={R} /><path d="M6 19l3-3h8v5l-3 3H6z" fill={Y} stroke={R} /></>,
  joystick: <><path d="M10 8c-6 0-7-6-2-7l0-1 4 2-3 3-1-1c-2 1-1 3 2 3z" fill="#3a7ad0" /><rect x="9" y="7" width="5" height="9" fill="#9cc8ee" stroke="#5080a8" /><path d="M1 20l8-6h6l8 5-8 5H8z" fill="#b0d4f0" stroke="#6a9" /></>,
  greens: <><g>{Cube(1, 12, 10, '#18c818', '#111')}</g>{Cube(13, 1, 10, '#18c818', '#111')}<rect x="8" y="10" width="7" height="6" fill={Y} transform="rotate(-45 11 13)" stroke="#2a3ad8" /></>,
  prt: <><T x={10} y={8.500} s={7.500} f={B}>PRT</T><path d="M3 23c5-1 8-4 9-8l-3 0 8-5 5 4-4 1c-2 4-5 7-10 8z" fill="#1a2ae0" /></>,
  tree: <><path d="M5 3v19M5 9h7M5 16h7M5 22h7" stroke="#111" strokeWidth="2.400" /><rect x="1" y="0" width="9" height="5" fill={Y} stroke="#111" /><rect x="12" y="7" width="11" height="4" fill={Y} stroke="#111" /><rect x="12" y="14" width="11" height="4" fill="#fff" stroke="#111" strokeDasharray="2 1" /><rect x="12" y="20" width="11" height="4" fill={Y} stroke="#111" /></>,
  layers: <>{Lyr(13, '#b0c8b0')}{Lyr(10, '#a0c0c0')}{Lyr(7, '#9a98c8')}{Lyr(4, '#a0a8d0')}{Lyr(1, '#70b898')}</>,
  twoSq: <><rect x="12" y="1" width="8" height="8" fill="#fff" stroke="#111" strokeWidth="1.300" /><path d="M12 9l-4 6" stroke="#111" /><rect x="3" y="14" width="8" height="8" fill={Y} stroke={R} strokeWidth="1.300" /><rect x="7" y="9" width="6" height="6" fill="#fff" stroke="#111" /></>,
  wcs: <><path d="M3 15l9-5 9 4-9 5zM3 15v5l9 3 9-5v-4" fill={Y} stroke="#2a3ad8" /><path d="M10 12V2M10 12l7-7M10 12l9 1" stroke={R} /><T x={8} y={5} s={7} f={R} w={400}>z</T><T x={17} y={5} s={7} f={R} w={400}>y</T><T x={22} y={12} s={7} f={R} w={400}>x</T></>,
  yCubes: <>{Cube(2, 0, 11)}{Cube(0, 12, 11)}{Cube(12, 12, 11)}</>,
  tube: <><path d="M6 8l13-6c3-1 5 3 4 7s-4 7-6 7L5 21z" fill="#bcd4f2" stroke="#8aa" /><ellipse cx="6" cy="14.500" rx="5" ry="7" fill="#8aa8d4" stroke="#667" /><ellipse cx="6" cy="14.500" rx="2.500" ry="3.600" fill="#334a78" /></>,
  ySheet: <><path d="M3 4l7-3 3 2 6-2 2 9 0 11-6-1-4 1-4-1-5 1z" fill={Y} stroke={B} strokeWidth="1.300" /><path d="M12 3v18M3 12h18" stroke={R} /></>,
  gBar1: <><rect x="7" y="2" width="12" height="20" fill="#18c818" stroke={R} /><path d="M13 2v20" stroke="#123ad8" strokeWidth="1.300" strokeDasharray="2 1" /></>,
  gBar2: <><rect x="6" y="3" width="12" height="18" fill="#18d818" stroke={B} /><path d="M12 0l2 3h-4zM12 24l2-3h-4z" fill={R} /></>,
  gRect: <><rect x="2" y="3" width="20" height="17" fill="#0cdc10" stroke={B} strokeWidth="1.400" /><circle cx="12" cy="12" r="1.400" fill="#e01818" stroke={Y} strokeWidth=".5" /></>,
  xyz: <><path d="M11 2L3 20l-1 3 3-2 7-17h2" stroke="#111" strokeWidth="1.100" fill="none" /><T x={19} y={7} s={7.500} f="#901818">X=</T><T x={19} y={15} s={7.500} f="#901818">Y=</T><T x={19} y={23} s={7.500} f="#901818">Z=</T></>,
  checks: <><path d="M1 4l6 5 3-7-2 10-7-4M8 9l6 5 3-6-2 10-7-5M15 15l4 5 4-8-3 11-6-5" fill="none" stroke="#18c030" strokeWidth="2" /></>,
  redBox: <><path d="M2 6l5-4h15v14l-5 5H2z" fill="none" stroke="#d82020" strokeDasharray="1.600 1" /><path d="M3 18c0-6 1-9 5-11h14l1 3c-1 4-3 8-6 11H7z" fill="#5a8ae8" stroke="#3a5ab8" /><path d="M8 9c3-1 8 0 9 3-2 2-6 3-10 2z" fill="#b0ccf8" /></>,
  purple: <><path d="M1 7l10-6 10 5-10 5z" fill="#c8a8f0" stroke="#7a5ab0" /><path d="M1 7l10 5v11L1 18z" fill="#f0a830" stroke="#e04020" /><path d="M11 12l10-6v9l-10 7z" fill="#9060d0" /><rect x="11" y="10" width="11" height="14" fill="#fff" stroke="#222" /><path d="M14 13h6v4h-6v4h6" stroke="#222" fill="none" /></>,
  teal: <><path d="M1 2h8" stroke="#c01818" strokeWidth="1.400" /><rect x="3" y="8" width="14" height="15" fill="#1ea89a" stroke="#111" /><circle cx="16" cy="9" r="7" fill="none" stroke="#111" strokeWidth="1.400" /></>,
  a: <text x="12" y="21" textAnchor="middle" fontSize="26" fontWeight="700" fontFamily='"Liberation Serif",serif' fill="#111">A</text>,
  palette: Palette,
  circles: <><rect x="1" y="1" width="22" height="22" fill="#d4d4d4" stroke="#888" strokeWidth="1.200" /><circle cx="8" cy="12" r="5" fill="none" stroke="#b06060" /><circle cx="8" cy="12" r="2.500" fill="none" stroke="#a09040" /><circle cx="17" cy="7" r="4" fill="none" stroke="#609060" /><circle cx="17" cy="17" r="4.500" fill="none" stroke="#6070b0" /></>,
  boltY: <path d="M1 5l12-4-2 7 5-1-2 5 4-1 5 11-10-9 1 4-5-5 0 3z" fill={Y} stroke={R} />,
  chains: <><rect x="3" y="6" width="9" height="14" fill="#8a8a8a" stroke="#777" /><circle cx="14" cy="7" r="4" fill="none" stroke="#8f8f8f" strokeWidth="2" /><circle cx="14" cy="15" r="4" fill="none" stroke="#a8a890" strokeWidth="2" /></>,
  wrenchF: <><path d="M3 6c3-3 7-3 10 0l-2 2c-2-2-4-1-6 0z" fill="#8d9aa0" /><path d="M9 11h11l-4 5v5h-3v-5z" fill="#a09a80" /></>,
  target: <><rect x="1" y="1" width="22" height="22" fill="none" stroke="#c01818" strokeWidth="1.400" /><circle cx="9" cy="9" r="3" fill="none" stroke="#111" /><path d="M9 3v12M3 9h12" stroke="#b01010" /><path d="M12 14h9l-3 4v4h-3v-4z" fill="#f0a020" /></>,
  rotT: <><path d="M4 8c2-6 10-6 12-1l-3 0 4 4 3-4-2 0" fill="none" stroke="#999" strokeWidth="2" /><circle cx="14" cy="16" r="4" fill="none" stroke="#a87070" /><path d="M14 10v12M8 16h12" stroke="#a87070" /></>,
  pipeG: <><path d="M2 6l6-3 7 3-5 5z" fill="#8a8a8a" /><path d="M10 8h5v3h4v3h2v8h-5v-6h-4z" fill="#9a9a9a" /></>,
  dashRect: <><rect x="3" y="3" width="17" height="17" fill="none" stroke="#222" strokeDasharray="2 2" /><circle cx="3" cy="3" r="1.200" fill={R} /><circle cx="20" cy="20" r="1.500" fill={R} /><circle cx="3" cy="20" r="1.200" fill={R} /></>,
  sqCube: <><path d="M3 8l8-5 9 3-1 11-8 5-8-4z" fill="#ddd" stroke="#555" /><path d="M3 8l9 3 8-5M12 11l-1 11" stroke="#555" fill="none" /><path d="M7 6l8 3" stroke="#d03030" strokeWidth="1.600" /></>,
  blCube: <><path d="M3 7l9-5 9 3v12l-9 5-9-4z" fill="#5cb0f0" stroke="#d05050" /><path d="M3 7l9 4 9-6-9-3z" fill="#a0d8fc" /><path d="M12 11v11" stroke="#3070b0" /></>,
  snapAll: <><path d="M1 3l5 3-5 3z" fill="#18a018" /><path d="M1 13l5 3-5 3z" fill={R} /><path d="M12 4l8 8-8 8-8-8z" fill="#fff" stroke="#111" /><circle cx="12" cy="12" r="2.500" fill="#f0c020" stroke="#806010" /><circle cx="12" cy="4" r="1.800" fill="#222" /><circle cx="20" cy="12" r="1.800" fill="#222" /><circle cx="12" cy="20" r="1.800" fill="#222" /><circle cx="4" cy="12" r="1.800" fill="#222" /></>,
  line1: <><path d="M4 20L19 5" stroke="#222" strokeWidth="1.100" /><circle cx="19" cy="5" r="2" fill={R} /></>,
  line2: <><path d="M4 20L20 4" stroke="#222" strokeWidth="1.100" /><circle cx="12" cy="12" r="2" fill={R} /></>,
  curveS: <><path d="M3 4h4c3 0 3 4 5 7s1 9 7 9h2" stroke="#222" strokeWidth="1.100" fill="none" /><circle cx="11" cy="11" r="2" fill={R} /></>,
  zig: <><path d="M2 19L9 4l5 15 7-9M3 12h16" stroke="#9a22c0" strokeWidth="1.200" fill="none" /><circle cx="2" cy="19" r="1.700" fill={R} /><circle cx="9" cy="4" r="1.700" fill={R} /><circle cx="14" cy="19" r="1.700" fill={R} /><circle cx="21" cy="10" r="1.700" fill={R} /></>,
  arcT: <><path d="M2 19c0-5 5-9 10-9s10 4 10 9M12 3v18" stroke="#222" fill="none" /><circle cx="12" cy="10" r="2" fill={R} /></>,
  ringC: <><circle cx="12" cy="12" r="9" fill="none" stroke="#222" strokeWidth="1.200" /><circle cx="12" cy="12" r="2" fill={R} /></>,
  ringQ: <><circle cx="12" cy="12" r="9" fill="none" stroke="#222" strokeWidth="1.200" /><circle cx="12" cy="3" r="2" fill={R} /><circle cx="21" cy="12" r="2" fill={R} /><circle cx="12" cy="21" r="2" fill={R} /><circle cx="3" cy="12" r="2" fill={R} /></>,
  cross: <><path d="M3 12h18M12 3v18" stroke="#111" strokeWidth="1.300" /><circle cx="12" cy="12" r="2" fill={R} /></>,
  surf: <><path d="M3 8c5-7 13-7 18-4-5 3-4 11-1 16-7-1-13-4-17-12z" fill="#b8e0f8" stroke="#3a7ab8" /><circle cx="12" cy="9" r="2" fill={R} /></>,
  gridT: <><path d="M3 3l14 3 3 16-14-3zM7 4l3 17M12 5l3 16M4 8l14 3M5 13l14 3" fill="#e6e6e6" stroke="#111" /><circle cx="12" cy="10" r="1.800" fill={R} /></>
};
const Ico: React.FC<{ n: string; s?: number }> = ({ n, s = 24 }) => <ToolSvg $s={s} viewBox="0 0 24 24">{ICONS[n]}</ToolSvg>;

type Tok = string | number;
/* numbers = caret width, "|n" = separator, "~n" = grip, "_n" = spacer */
const Tools: React.FC<{ items: Tok[]; cell?: number; s?: number }> = ({ items, cell = 31, s = 24 }) => (
  <>{items.map((t, i) => {
    if (typeof t === 'number') return <Caret key={i} $w={t} $up={3} />;
    if (t[0] === '|') return <Sep key={i} $w={+t.slice(1)} />;
    if (t[0] === '~') return <Grip key={i} $w={+t.slice(1)} />;
    if (t[0] === '_') return <Cell key={i} $w={+t.slice(1)} />;
    if (t[0] === '#') return <BoxCell key={i} $w={cell}><Ico n={t.slice(1)} s={s} /></BoxCell>;
    return <Cell key={i} $w={cell}><Ico n={t} s={s} /></Cell>;
  })}</>
);

type NodeRow = { lvl: number; exp?: '+' | '-'; check?: boolean; ic: string; text: React.ReactNode; bold?: boolean; latest?: boolean; v?: [number, number]; vl?: number; };

const CheckMark: React.FC<{ s?: number }> = ({ s = 13 }) => (
  <svg width={s} height={s} viewBox="0 0 14 14"><path d="M1 8l2-2 3 3 6-8 1 2-7 10z" fill="#18b838" stroke="#0f8f2a" strokeWidth=".6" /></svg>
);
const CheckBox = styled.span`
  width: 13px; height: 13px; flex: none; border: 1.5px solid #111; background: #fff; display: flex; align-items: center; justify-content: center;
`;
const TREE_ICONS: Record<string, React.ReactNode> = {
  clock: <><circle cx="8" cy="8" r="7.200" fill="#e6eaf2" stroke="#667" strokeWidth="1.200" /><path d="M8 3v5h4" stroke="#111" strokeWidth="1.300" fill="none" /></>,
  view: <><path d="M8 1l6 3v7l-6 4-6-4V4z" fill="#d9f5e4" stroke="#129a58" strokeWidth="1.300" /><path d="M2 4l6 4 6-4M8 8v7M2 11l6-3 6 3" stroke="#129a58" fill="none" /><path d="M4 16l8-4" stroke={R} /></>,
  cam: <><path d="M1 4l11-3 3 10-11 4z" fill="#fff" stroke={R} strokeWidth="1.300" /><circle cx="7" cy="8" r="3" fill="#3a6ad0" stroke="#123" /><rect x="11" y="7" width="4" height="4" fill="#111" /></>,
  folder: <><path d="M1 5h6l1-1h6v10H1z" fill="#f0b020" stroke="#805a10" /><path d="M3 7h12l-3 8H1z" fill="#ffe27a" stroke="#805a10" /></>,
  folderN: <><path d="M8 1h7M8 3h7" stroke="#2a3ab0" /><path d="M1 5h6l1-1h6v10H1z" fill="#f0b020" stroke="#805a10" /><path d="M3 7h12l-3 8H1z" fill="#ffe27a" stroke="#805a10" /></>,
  datum: <><path d="M3 1v9M1 3l2-2 2 2" stroke="#1a2ad0" fill="none" /><path d="M3 10l7-7M3 10l11 5" stroke="#333" /><path d="M6 5l8 5-3 4-6-5z" fill="none" stroke="#333" /><path d="M8 13l6 2" stroke={R} strokeWidth="1.300" /></>,
  sketch: <><rect x="1" y="2" width="5" height="5" fill="#fff" stroke="#111" /><rect x="1" y="10" width="5" height="5" fill="#fff" stroke="#111" /><rect x="9" y="10" width="5" height="5" fill="#fff" stroke="#111" /><path d="M8 9l6-8 2 2-6 7z" fill="#f0c020" stroke="#a03010" strokeWidth=".6" /></>,
  pipe: <><path d="M3 6l9-4c3-1 4 2 3 5s-3 5-4 5l-8 2z" fill="#b8cff0" stroke="#667" strokeWidth=".6" /><ellipse cx="4" cy="10" rx="3.500" ry="4" fill="#6a8ac0" /><ellipse cx="4" cy="10" rx="1.600" ry="2" fill="#223" /></>,
  extrude: <><path d="M1 3h14v10H1z" fill="#f29a22" stroke="#a45a10" /><path d="M4 3v10M8 3v10M12 3v10" stroke="#7a4008" strokeWidth="1.200" /><path d="M1 14h14" stroke="#1a50d0" strokeWidth="2" strokeDasharray="2 1" /><path d="M2 1h12" stroke="#a45a10" /></>
};
const TreeIco: React.FC<{ n: string }> = ({ n }) => <svg width="16" height="16" viewBox="0 0 16 16" style={{ flex: 'none' }}>{TREE_ICONS[n]}</svg>;

const num = (d: number, extra?: string) => <>（<Mono>{d}</Mono>）{extra && <Mono>{extra}</Mono>}</>;
const treeRows: NodeRow[] = [
  { lvl: 0, ic: 'clock', text: '历史记录模式', v: [10, 0], vl: 9 },
  { lvl: 0, exp: '+', ic: 'view', text: '模型视图', v: [0, 0], vl: 9 },
  { lvl: 0, exp: '+', check: true, ic: 'cam', text: '摄像机', v: [0, 0], vl: 9 },
  { lvl: 0, ic: 'folderN', text: '用户表达式', v: [0, 0], vl: 9 },
  { lvl: 0, exp: '-', ic: 'folder', text: '模型历史记录', v: [0, 10], vl: 9 },
  { lvl: 1, ic: 'datum', text: <>基准坐标系 {num(0)}</>, latest: true },
  { lvl: 1, ic: 'sketch', text: <>草图 {num(1, '"SKETCH_...')}</>, latest: true },
  { lvl: 1, ic: 'sketch', text: <>草图 {num(2, '"SKETCH_...')}</>, latest: true },
  { lvl: 1, ic: 'pipe', text: <>管道 {num(3)}</>, latest: true },
  { lvl: 1, ic: 'extrude', text: <>拉伸 {num(4)}</>, latest: true },
  { lvl: 1, ic: 'extrude', text: <>拉伸 {num(5)}</>, latest: true },
  { lvl: 1, ic: 'extrude', text: <>拉伸 {num(6)}</>, latest: true },
  { lvl: 1, ic: 'extrude', text: <>拉伸 {num(7)}</>, latest: true },
  { lvl: 1, ic: 'extrude', text: <>拉伸 {num(8)}</>, latest: true, bold: true }
];

const TabIco: React.FC<{ children: React.ReactNode; s?: number }> = ({ children, s = 24 }) => <ToolSvg $s={s} viewBox="0 0 24 24">{children}</ToolSvg>;

const Model: React.FC = () => (
  <svg width="1040" height="526" viewBox="0 180 1040 526" style={{ display: 'block' }}>
    <defs>
      <linearGradient id="tubeR" gradientUnits="userSpaceOnUse" x1="505" y1="323" x2="449" y2="462">
        <stop offset="0" stopColor="#c6dde3" /><stop offset=".3" stopColor="#cfe4ea" /><stop offset=".45" stopColor="#d9edf3" /><stop offset=".66" stopColor="#8c9ca0" /><stop offset=".85" stopColor="#5a6669" /><stop offset="1" stopColor="#7a8b8f" />
      </linearGradient>
      <linearGradient id="tubeL" gradientUnits="userSpaceOnUse" x1="220" y1="470" x2="347" y2="549">
        <stop offset="0" stopColor="#bcd3d9" /><stop offset=".35" stopColor="#c6dde3" /><stop offset=".6" stopColor="#f5ffff" /><stop offset=".72" stopColor="#d4e6ea" /><stop offset=".9" stopColor="#8b9a9e" /><stop offset="1" stopColor="#66757a" />
      </linearGradient>
      <radialGradient id="elbow" gradientUnits="userSpaceOnUse" cx="432" cy="462" r="158">
        <stop offset="0" stopColor="#343d40" /><stop offset=".13" stopColor="#465255" /><stop offset=".3" stopColor="#8da1a6" /><stop offset=".5" stopColor="#d4e6ea" /><stop offset=".66" stopColor="#e8f8fb" /><stop offset=".84" stopColor="#d2e6ec" /><stop offset="1" stopColor="#c8dfe5" />
      </radialGradient>
      <linearGradient id="cap" gradientUnits="userSpaceOnUse" x1="660" y1="495" x2="720" y2="570">
        <stop offset="0" stopColor="#454e51" /><stop offset=".55" stopColor="#5a6669" /><stop offset="1" stopColor="#6b7a7d" />
      </linearGradient>
      <linearGradient id="sideR" gradientUnits="userSpaceOnUse" x1="820" y1="540" x2="925" y2="380">
        <stop offset="0" stopColor="#5d6a6d" /><stop offset=".5" stopColor="#75878a" /><stop offset="1" stopColor="#6a7b7e" />
      </linearGradient>
      <linearGradient id="hole" x1="0" y1="0" x2="1" y2="0">
        <stop offset="0" stopColor="#5f7074" /><stop offset=".5" stopColor="#4a5356" /><stop offset="1" stopColor="#434a4c" />
      </linearGradient>
      <linearGradient id="bore" x1="0" y1="0" x2="1" y2="0">
        <stop offset="0" stopColor="#4a5356" /><stop offset=".3" stopColor="#5d6d70" /><stop offset=".6" stopColor="#4a5356" /><stop offset="1" stopColor="#434a4c" />
      </linearGradient>
      <linearGradient id="lowHole" x1="0" y1="0" x2="1" y2="0">
        <stop offset="0" stopColor="#55656a" /><stop offset=".45" stopColor="#b4cbd0" /><stop offset=".62" stopColor="#f2ffff" /><stop offset="1" stopColor="#c6dade" />
      </linearGradient>
      <linearGradient id="lowRing" x1="0" y1="0" x2="1" y2="0">
        <stop offset="0" stopColor="#7f9095" /><stop offset=".35" stopColor="#eafafc" /><stop offset=".7" stopColor="#aec4c9" /><stop offset="1" stopColor="#e0eff2" />
      </linearGradient>
      <linearGradient id="bandA" x1="0" y1="1" x2="1" y2="0">
        <stop offset="0" stopColor="#99b0b6" /><stop offset="1" stopColor="#c9dfe4" />
      </linearGradient>
      <linearGradient id="bandC" x1="0" y1="0" x2="1" y2="1">
        <stop offset="0" stopColor="#cde3e9" /><stop offset="1" stopColor="#eefbfd" />
      </linearGradient>
      <linearGradient id="bandE" x1="0" y1="0" x2="1" y2="0">
        <stop offset="0" stopColor="#e6f5f7" /><stop offset="1" stopColor="#bfd3d8" />
      </linearGradient>
    </defs>
    {/* pipe */}
    <path d="M504.600 323C480 340 462 375 452 405C445 430 446 448 455 463L677 553L720 500L660 385Z" fill="url(#tubeR)" />
    <path d="M660 492C655 510 655 530 658 547L677 553C710 568 770 572 811 545L786 543L623 477Z" fill="url(#cap)" />
    <path d="M660 493C655 510 655 530 658 547" fill="none" stroke="#2a3033" strokeWidth=".7" />
    <path d="M274 391C290 360 330 325 378 316C410 309 460 308 504.600 323C480 340 462 375 452 405C445 430 446 448 455 463C440 458 415 455 397 477C390 445 340 405 274 391Z" fill="url(#elbow)" />
    <path d="M217 483L274 391C340 405 390 445 397 477L348 550L290 570L230 510Z" fill="url(#tubeL)" />
    <path d="M274 391C340 405 390 445 397 477" fill="none" stroke="#1b1f21" strokeWidth=".8" />
    <path d="M504.600 323C480 340 462 375 452 405C445 430 446 448 449 459" fill="none" stroke="#1b1f21" strokeWidth=".8" />
    {/* square flange */}
    <path d="M612 453L788 523L819 518L917 360L923.600 366L923.600 383L828 531L811 545L786 543L623 477L608 462Z" fill="#454c4f" />
    <path d="M819 518L917 360L923.600 366L923.600 383L828 531L811 545L787 543L790 526Z" fill="url(#sideR)" />
    <path d="M623 462L626 478M785 524L788 543M821 520L828 531" stroke="#23282a" strokeWidth=".7" fill="none" />
    <path d="M741 269L906 337Q922 345 917 360L819 518Q808 532 788 523L612 453Q600 445 608 423L702 278Q715 262 741 269Z" fill="#cbe2e8" stroke="#3a4144" strokeWidth=".6" />
    <ellipse cx="729" cy="299" rx="15.500" ry="13.500" fill="url(#hole)" stroke="#2d3335" strokeWidth=".6" />
    <ellipse cx="879.500" cy="361" rx="15.500" ry="13.500" fill="url(#hole)" stroke="#2d3335" strokeWidth=".6" />
    <ellipse cx="644" cy="432" rx="15.500" ry="13.500" fill="url(#hole)" stroke="#2d3335" strokeWidth=".6" />
    <path d="M636 443c5 3 11 3 15 0c-4-2-11-2-15 0z" fill="#dff" />
    <ellipse cx="794.500" cy="492.500" rx="15.500" ry="13.500" fill="url(#hole)" stroke="#2d3335" strokeWidth=".6" />
    <ellipse cx="761.500" cy="396" rx="76" ry="65" fill="#4a5356" stroke="#2a2f31" strokeWidth=".7" />
    <ellipse cx="760" cy="397" rx="73" ry="62" fill="none" stroke="#9fb2b7" strokeWidth=".7" />
    <ellipse cx="762" cy="395" rx="69" ry="59.500" fill="#cbe2e8" stroke="#2a2f31" strokeWidth=".6" />
    <ellipse cx="761.500" cy="396" rx="43" ry="37" fill="url(#bore)" stroke="#3a4144" strokeWidth=".5" />
    <path d="M749 431c3-5 12-9 28-3" fill="none" stroke="#23282a" strokeWidth=".6" />
    <path d="M761.700 396L769.400 431.700" stroke="#3a50e0" strokeWidth="1.600" />
    {/* oval flange */}
    <path d="M112 510L115 503Q122 488 135 478L146.700 476.700L128 505Z" fill="url(#bandA)" />
    <path d="M146.700 476.700L216.700 482.700L200 511L128 505Z" fill="#afc5cb" />
    <path d="M216.700 482.700Q255 490 288 511.700L273 540Q235 516 200 511Z" fill="url(#bandC)" />
    <path d="M288 511.700L371.700 566.700L355 597L273 540Z" fill="#fbffff" />
    <path d="M371.700 566.700Q392 582 398 603L381 632Q375 612 355 597Z" fill="url(#bandE)" />
    <path d="M146.700 476.700L128 505M216.700 482.700L200 511M288 511.700L273 540M371.700 566.700L355 597M216.700 482.700Q255 490 288 511.700" fill="none" stroke="#1d2224" strokeWidth=".8" />
    <path d="M112 510Q118 503 133 505L200 511Q233 516 273 540L353 597Q372 610 380 627Q384 637 367 640L300 633Q270 628 250 620L207 593L150 553L113 518Z" fill="#454c4f" stroke="#33393b" strokeWidth=".6" />
    <ellipse cx="149" cy="532.500" rx="23" ry="12.500" transform="rotate(30 149 532.500)" fill="url(#lowHole)" stroke="#2b3032" strokeWidth=".6" />
    <ellipse cx="342.700" cy="611.700" rx="23" ry="12.500" transform="rotate(30 342.700 611.700)" fill="url(#lowHole)" stroke="#2b3032" strokeWidth=".6" />
    <g transform="rotate(33 243 575)">
      <ellipse cx="243" cy="575" rx="76" ry="42" fill="#454c4f" stroke="#252a2c" strokeWidth=".7" />
      <ellipse cx="243" cy="575" rx="71" ry="38" fill="url(#lowRing)" stroke="#2a2f31" strokeWidth=".6" />
      <ellipse cx="240" cy="577" rx="68" ry="35" fill="#454c4f" />
    </g>
    <ellipse cx="246" cy="572" rx="42" ry="23" transform="rotate(33 246 572)" fill="url(#lowHole)" stroke="#33393b" strokeWidth=".5" />
    <path d="M255.700 556.700L246 572.300" stroke="#3a50e0" strokeWidth="1.600" />
    {/* wcs */}
    <g fill="none" stroke="#c99d9d" strokeWidth=".7" opacity=".55">
      <path d="M382 322L386 355L422 368L443 339L407 323ZM386 355L407 323M422 368L418 348L397 340M382 322L400 302L407 323M382 322L443 339" />
    </g>
    <path d="M407 323L424 295" stroke="#b07a7a" strokeWidth=".8" />
    <path d="M420 301L426 290L428 302Z" fill="#a06868" />
    <path d="M377 322V314" stroke="#b07a7a" />
    <path d="M374 317L377 310L380 317Z" fill="#a06868" />
    <path d="M422 368L443 378" stroke="#d8c5c5" strokeWidth=".6" />
    <path d="M442 375L457 383L443 381Z" fill="#f2ece4" />
    <text x="427" y="292" fontSize="12" fill="#a86c6c" fontFamily='"Liberation Sans",sans-serif'>Y</text>
    <text x="371" y="310" fontSize="12" fill="#a86c6c" fontFamily='"Liberation Sans",sans-serif'>Z</text>
    <text x="459" y="393" fontSize="10" fill="#7f7672" fontFamily='"Liberation Sans",sans-serif'>X</text>
    {/* triad */}
    <path d="M46 650L51 636L60 631L71 639L68 654L56 662Z" fill="#9a9a9a" stroke="#b0b0b0" strokeWidth=".5" />
    <path d="M51 636L62 646L71 639M62 646L56 662" stroke="#bdbdbd" strokeWidth=".7" fill="none" />
    <path d="M46 655L62 634" stroke="#a7d3a7" strokeWidth=".8" />
    <path d="M45 656L44 641" stroke="#1a3ad0" strokeWidth="2" />
    <path d="M46 656L73 667" stroke="#c02828" strokeWidth="2" />
    <circle cx="46" cy="656" r="4" fill="#d8d8d8" />
    <text x="38" y="643" fontSize="13" fill="#1a4ae0" fontFamily='"Liberation Sans",sans-serif'>Z</text>
    <text x="59" y="634" fontSize="13" fill="#2a9a2a" fontFamily='"Liberation Sans",sans-serif'>Y</text>
    <text x="73" y="674" fontSize="13" fill="#d02828" fontFamily='"Liberation Sans",sans-serif'>X</text>
  </svg>
);

const row1a: Tok[] = ['~7'];
export default function App() {
  return (
    <Page>
      <Global />
      <TitleBar>
        <Ico n="logo" s={20} />
        <TitleText>NX 10 - 建模 - [24.prt]</TitleText>
        <Siemens>SIEMENS</Siemens>
        <WinBtn><svg width="9" height="9"><rect x="1" y="6" width="7" height="2.500" fill="#fff" /></svg></WinBtn>
        <WinBtn><svg width="11" height="11"><path d="M4 1h6v6H8M1 4h6v6H1z" fill="none" stroke="#fff" strokeWidth="1.200" /></svg></WinBtn>
        <WinBtn $red><svg width="11" height="11"><path d="M1 1l9 9M10 1l-9 9" stroke="#fff" strokeWidth="2" /></svg></WinBtn>
      </TitleBar>
      <MenuBar>
        <MenuIconSlot>
          <svg width="16" height="17" viewBox="0 0 16 17"><path d="M4 1l6 0v9l4-1v5l-6 2-6-3z" fill="#2f72cc" stroke="#123e80" /></svg>
        </MenuIconSlot>
        <MenuItem>文件<Mono>(F)</Mono></MenuItem>
        <MenuItem>编辑<Mono>(E)</Mono></MenuItem>
        <MenuItem>视图<Mono>(V)</Mono></MenuItem>
        <MenuItem>插入<Mono>(S)</Mono></MenuItem>
        <MenuItem>格式<Mono>(R)</Mono></MenuItem>
        <MenuItem>工具<Mono>(T)</Mono></MenuItem>
        <MenuItem>装配<Mono>(A)</Mono></MenuItem>
        <MenuItem>信息<Mono>(I)</Mono></MenuItem>
        <MenuItem $after={11}>分析<Mono>(L)</Mono></MenuItem>
        <MenuItem>首选项<Mono>(P)</Mono></MenuItem>
        <MenuItem $after={1}>洁强工具<Mono>v2.59</Mono></MenuItem>
        <MenuItem>窗口<Mono>(O)</Mono></MenuItem>
        <MenuItem>帮助<Mono>(H)</Mono></MenuItem>
        <DocBtns>
          <DocBtn><svg width="10" height="10"><rect x="1" y="7" width="7" height="2" fill="#666" /></svg></DocBtn>
          <DocBtn><svg width="10" height="10"><path d="M3 1h6v6H7M1 3h6v6H1z" fill="none" stroke="#666" /></svg></DocBtn>
          <DocBtn><svg width="10" height="10"><path d="M1 1l8 8M9 1l-8 8" stroke="#666" strokeWidth="1.800" /></svg></DocBtn>
        </DocBtns>
      </MenuBar>

      <ToolRow $h={33}>
        <Panel>
          <Tools items={row1a} />
          <Tools items={['logo']} />
          <StartLabel>启动</StartLabel>
          <Caret $w={10} />
          <Tools items={['new', 'open', 'save', '|5', 'cut', 'copy', 'paste', 'del', '|6', 'undo', 12, 'redo', '|6', 'savePen', 12, '|6']} />
          <SearchBox>查找命令
            <svg width="15" height="15" viewBox="0 0 15 15"><circle cx="9" cy="6" r="4.500" fill="#fff" stroke="#555" strokeWidth="1.300" /><path d="M6 9l-5 5" stroke="#555" strokeWidth="2" /></svg>
          </SearchBox>
          <Tools items={[12, '_3']} />
        </Panel>
        <Panel>
          <Tools items={['~8', 'fit', 11, 'shape', 13, 'cube', 12, 'square', 12, '|6', 'slab', 'slab2', 11, '_2']} />
        </Panel>
        <Panel>
          <Tools items={['~8', 'palDia', '|2', 'triDia', 11, '|11', 'antenna', 12, 'rulerDim', 12, '_2']} />
        </Panel>
      </ToolRow>
      <ToolRow $h={34}>
        <Panel>
          <Tools items={['~7', 'bolt', 'handBox', 'spot', 'redList', 'fitBox', 'listPM', 11, '_3']} />
        </Panel>
        <Panel>
          <Tools items={['~8', 'dxf', 'inch', 'layersY', 'open', 'saveWin', 'yellowSq', 'calc', 'moon', 'frac', 11, '_2']} />
        </Panel>
        <Panel>
          <Tools items={['~7', 'pnc', 'handDoc', 'yellowTo', 'redBlueList', 'greenBlock', 'wave', 'bear', 'folderTree', 'wrench', 'tree12', 'blueBars', 'xyArrows', 'listRed', 'drill', 'yArc', 11, '_3']} />
        </Panel>
        <Panel $grow>
          <Tools items={['~7', 'lyrList', 'lyrView', 'lyrStack', 'lyrArrow', 'lyrDoc', '|4', 'poly', 16, '|3', 'mfc', 'up', 'down', 'star']} />
          <Overflow><span>»</span><Caret $w={10} /></Overflow>
        </Panel>
      </ToolRow>
      <ToolRow $h={35}>
        <Panel>
          <Tools items={['~6', 'box', '_1', 'redCube', 'tray', 'info', 'net', 'plate', 'xDim', 'circ', 'wire', 'wand', 'cyl', 'step', 'rulerA', 'kg', 'joystick', 'greens', 'prt', 'tree', 'layers', 'twoSq', 'wcs', 'yCubes', 'tube', 'ySheet', 'gBar1', 'gBar2', 'gRect', 'xyz', 'checks', 'redBox', 'purple', 'teal', 'a', 'palette', 'circles', 'boltY', 13, '_2']} />
        </Panel>
      </ToolRow>
      <SelBar>
        <Drop $w={115}>没有选择过滤器<DropArrow /></Drop>
        <Drop $w={122}>整个装配<DropArrow /></Drop>
        <Tools cell={22} s={20} items={['chains', '|5', 'wrenchF', 'target', 10, 'rotT', 'pipeG', '|9', 'dashRect', 12, '|6', 'sqCube', 'blCube', '|7']} />
        <Tools cell={23.500} s={20} items={['#snapAll', '#line1', '#line2', 'curveS', '#zig', 'arcT', '#ringC', 'ringQ', '#cross', '#line2', 'surf', '|6']} />
        <Tools cell={24} s={19} items={['gridT']} />
        <SelEnd />
      </SelBar>

      <Main>
        <Canvas><Model /></Canvas>
        <SidePanel>
          <PanelHead>部件导航器</PanelHead>
          <Table>
            <THead><ThName>名称</ThName><ThLast>最新</ThLast></THead>
            <Rows>
              {Array.from({ length: 19 }).map((_, i) => {
                const r = treeRows[i];
                return (
                  <Row key={i} $alt={i % 2 === 1}>
                    <NameCell $lvl={r ? r.lvl : 0}>
                      {r && r.v && <VLine $l={9} $t={r.v[0]} $b={r.v[1]} />}
                      {r && r.lvl === 0 && <HLine $l={9} $w={10} />}
                      {r && r.lvl === 1 && <><VLine $l={28} $t={i === 5 ? -2 : 0} $b={i === 13 ? 10 : 0} /><HLine $l={28} $w={12} /></>}
                      {r && r.exp && <Expander>{r.exp === '+' ? '+' : '−'}</Expander>}
                      {r && r.lvl === 1 && <CheckBox><CheckMark s={11} /></CheckBox>}
                      {r && r.check && <CheckMark s={14} />}
                      {r && <TreeIco n={r.ic} />}
                      {r && <RowText $bold={r.bold}>{r.text}</RowText>}
                    </NameCell>
                    <LatestCell>{r && r.latest && <CheckMark />}</LatestCell>
                  </Row>
                );
              })}
            </Rows>
            <HScroll><ScrollArrow $side="l" /><ScrollThumb /><ScrollArrow $side="r" /></HScroll>
          </Table>
          <Sash><SashHandle /></Sash>
          <Accordion>
            {['相依性', '细节', '预览'].map(t => (
              <AccBar key={t}>{t}<AccChevron><svg width="13" height="10" viewBox="0 0 13 10"><path d="M1 1l5.500 7L12 1" fill="none" stroke="#444" strokeWidth="2.600" /></svg></AccChevron></AccBar>
            ))}
          </Accordion>
        </SidePanel>
        <TabRail>
          <GearSlot>
            <svg width="16" height="16" viewBox="0 0 16 16"><circle cx="8" cy="8" r="5" fill="none" stroke="#222" strokeWidth="2" /><path d="M8 0v3M8 13v3M0 8h3M13 8h3M2.300 2.300l2 2M11.700 11.700l2 2M13.700 2.300l-2 2M4.300 11.700l-2 2" stroke="#222" strokeWidth="1.600" /></svg>
          </GearSlot>
          <Tab $top={17}><TabIco>{Cube(0, 1, 10)}{Cube(6, 4, 8)}<path d="M4 16v7M4 19h8M14 10h10" stroke={B} strokeWidth="1.200" />{Cube(13, 14, 9)}</TabIco></Tab>
          <Tab $top={3}><TabIco><path d="M3 0l8 6 8-6v13l-8-6-8 6z" fill="#1422c8" /><rect x="1" y="14" width="9" height="9" fill={Y} stroke="#222" /><path d="M13 13l9 10h-9z" fill="#c81414" stroke="#222" /></TabIco></Tab>
          <Tab $top={0} $active $h={43}><TabIco s={25}><ellipse cx="6" cy="4" rx="5" ry="2.500" fill="#d79bc0" stroke="#7a2a6a" /><path d="M1 4v7c0 2 10 2 10 0V4" fill="#e4b0d0" stroke="#7a2a6a" /><path d="M13 9h10M7 14v8M7 18h6" stroke="#222" /><circle cx="18" cy="19" r="4.500" fill="none" stroke="#7a2a6a" strokeWidth="1.300" /><circle cx="18" cy="19" r="1.500" fill="#7a2a6a" /></TabIco></Tab>
          <Tab $top={1}><TabIco s={25}><path d="M1 7l3-4h5v20H1z" fill="#ef8a1a" stroke="#844" /><path d="M9 6l3-4h5v21H9z" fill="#3ac03a" stroke="#284" /><path d="M17 5l3-4h4v22h-7z" fill="#2a7ae0" stroke="#248" /><path d="M2 12h6M10 12h6M18 12h5" stroke="#fff" /></TabIco></Tab>
          <Tab $top={13}><TabIco s={26}><circle cx="9" cy="15" r="8" fill="#1d88e0" stroke="#0a4a90" /><text x="9" y="20" fontSize="13" fontWeight="700" textAnchor="middle" fill="#fff" fontFamily='"Liberation Sans",sans-serif'>i</text><path d="M10 4c6 0 10 4 10 9M10 0c8 0 14 6 14 13" fill="none" stroke="#2a6ac8" strokeWidth="2" /></TabIco></Tab>
          <Tab $top={15}><TabIco s={26}><path d="M4 1h12l5 5v17H4z" fill="#fff" stroke="#3a6ac0" /><circle cx="12" cy="14" r="6" fill="#2a9a4a" stroke="#1a5ad0" strokeWidth="1.500" /></TabIco></Tab>
          <Tab $top={13}><TabIco s={24}><circle cx="12" cy="12" r="11" fill="#d8e6f4" stroke="#667" strokeWidth="1.500" /><path d="M12 5v7h6" stroke="#123" strokeWidth="1.800" fill="none" /></TabIco></Tab>
          <Tab $top={3}><TabIco>{Wand}</TabIco></Tab>
          <Tab $top={2}><TabIco><path d="M3 1h10l-3 21H1z" fill="#3a7ad8" stroke="#e8b020" strokeDasharray="2 1" /><path d="M10 6l10 14" stroke="#222" strokeWidth="2.500" /><path d="M12 2v9M7 6h10" stroke="#fff" /></TabIco></Tab>
          <RailBtn $top={3}><svg width="9" height="8"><path d="M0 1h9M1 7l3.500-4L8 7z" stroke="#999" fill="#999" /></svg></RailBtn>
          <RailBtn $top={3}><svg width="9" height="6"><path d="M1 5l3.500-4L8 5z" fill="#aaa" /></svg></RailBtn>
          <RailBtn $top={2}><svg width="9" height="6"><path d="M1 1l3.500 4L8 1z" fill="#444" /></svg></RailBtn>
          <RailBtn $top={1}><svg width="9" height="8"><path d="M0 7h9M1 1l3.500 4L8 1z" stroke="#444" fill="#444" /></svg></RailBtn>
          <Meter>{Array.from({ length: 8 }).map((_, i) => <MeterTick key={i} $on={i >= 4} />)}</Meter>
        </TabRail>
      </Main>

      <StatusBar>
        <StatusCell $w={628} $line><StatusMsg>选择对象并使用 <StatusMono>MB3</StatusMono>，或者双击某一对象</StatusMsg></StatusCell>
        <StatusCell $w={625} $line>部件文件已保存</StatusCell>
        <StatusCell $w={20} $line />
        <StatusCell $w={75} $line>
          <svg width="16" height="16" viewBox="0 0 16 16"><rect width="16" height="16" fill="#7d9bab" /><path d="M3 3l9 2-1 6-8-2z" fill="#bbb" /><path d="M4 13l2-10" stroke="#555" /></svg>
          <svg width="16" height="16" viewBox="0 0 16 16"><path d="M0 4V0h4M12 0h4v4M16 12v4h-4M4 16H0v-4" fill="none" stroke="#555" /><rect x="3" y="3" width="10" height="10" fill="#fff" stroke="#555" /><rect x="4" y="5" width="8" height="6" fill="#2a7ad8" /></svg>
        </StatusCell>
      </StatusBar>
      <Taskbar>
        <TaskCell $w={50}>
          <svg width="22" height="22" viewBox="0 0 22 22"><path d="M1 4l8.500-1.300V10.500H1zM10.500 2.500L21 1v9.500H10.500zM1 11.500h8.500V19L1 18zM10.500 11.500H21V21l-10.500-1.500z" fill="#fff" /></svg>
        </TaskCell>
        <TaskCell $w={64}>
          <svg width="32" height="30" viewBox="0 0 32 30"><path d="M2 5h10l2-3h16v24H2z" fill="#e8cf8a" stroke="#a58b4a" /><rect x="5" y="2" width="4" height="3" fill="#2ab04a" /><rect x="21" y="4" width="5" height="4" fill="#3a8ae0" /><path d="M2 8h28v20H2z" fill="#f4e3ae" /><path d="M9 28v-9h14v9h-4v-5h-6v5z" fill="#7fb2d8" /><path d="M6 14h20v4H6z" fill="#6a9cc8" /></svg>
        </TaskCell>
        <TaskCell $w={58} $on="a"><Ico n="logo" s={32} /></TaskCell>
        <TaskCell $w={62}>
          <svg width="32" height="34" viewBox="0 0 32 34"><path d="M2 6c0-4 3-6 7-4l19 11c3 2 3 6 0 8L9 32c-4 2-7 0-7-4z" fill="#2aa4e8" /><path d="M2 6c0-4 3-6 7-4l8 5L7 17 7 26 2 28z" fill="#f59a1e" /><path d="M7 10l17 7-17 8z" fill="#4fc846" /><path d="M12 12l9 5-9 5z" fill="#fff" /></svg>
        </TaskCell>
        <TaskCell $w={66}>
          <svg width="30" height="30" viewBox="0 0 30 30"><circle cx="15" cy="15" r="15" fill="#e23a2e" /><path d="M15 15L2 23a15 15 0 0016 7z" fill="#2aa24a" /><path d="M15 9h13a15 15 0 01-11 21z" fill="#fbc02d" /><path d="M2 23L9 10a15 15 0 00-7 13z" fill="#2aa24a" /><circle cx="15" cy="15" r="7" fill="#fff" /><circle cx="15" cy="15" r="5.500" fill="#3a7ae8" /></svg>
        </TaskCell>
        <TaskCell $w={58} $on="b">
          <svg width="32" height="32" viewBox="0 0 32 32"><defs><linearGradient id="ffx" x1="0" y1="0" x2="0" y2="1"><stop offset="0" stopColor="#ffb11a" /><stop offset=".55" stopColor="#f7443c" /><stop offset="1" stopColor="#d61a74" /></linearGradient></defs><path d="M16 31C7 31 1 25 1 17 1 12 3 9 5 7l1 4c2-3 5-4 8-5 1-2 3-4 5-6-1 3 0 5 3 7 5 3 8 6 8 11 0 8-6 13-14 13z" fill="url(#ffx)" /><circle cx="16" cy="18" r="7.500" fill="#5b2a9a" /><path d="M4 14c5-3 12-3 15 1-3-1-6 0-8 1 0 2 3 4 7 3-2 3-8 4-12 0-2-1-2-3-2-5z" fill="#f9822a" /></svg>
        </TaskCell>
        <TaskCell $w={70}>
          <svg width="32" height="32" viewBox="0 0 32 32"><rect width="32" height="32" rx="6" fill="#1f86f0" /><circle cx="16" cy="16" r="11.500" fill="none" stroke="#fff" strokeWidth="2.400" /><text x="16" y="21.500" fontSize="15" fontWeight="700" textAnchor="middle" fill="#fff" fontFamily='"Liberation Sans",sans-serif'>K</text></svg>
        </TaskCell>
        <TaskCell $w={58}>
          <svg width="32" height="32" viewBox="0 0 32 32"><rect width="32" height="32" rx="5" fill="#fff" /><circle cx="16" cy="10" r="5" fill="none" stroke="#2aa0e8" strokeWidth="2.800" /><circle cx="9" cy="19" r="5" fill="none" stroke="#38b6f0" strokeWidth="2.800" /><circle cx="23" cy="19" r="5" fill="none" stroke="#2a8ae0" strokeWidth="2.800" /><rect x="12" y="28" width="4" height="3" fill="#e85050" /><rect x="16" y="28" width="4" height="3" fill="#2a8ae0" /></svg>
        </TaskCell>
        <TaskCell $w={58}>
          <svg width="33" height="32" viewBox="0 0 33 32"><defs><linearGradient id="iq" x1="0" y1="0" x2="1" y2="1"><stop offset="0" stopColor="#1ed760" /><stop offset=".55" stopColor="#19b6a4" /><stop offset="1" stopColor="#b45cf0" /></linearGradient></defs><rect width="33" height="32" rx="3" fill="url(#iq)" /><text x="16.500" y="20" fontSize="10.500" fontWeight="700" textAnchor="middle" fill="#fff" fontFamily='"Liberation Sans",sans-serif'>iQIYI</text></svg>
        </TaskCell>
        <Tray>
          <svg width="10" height="6" viewBox="0 0 10 6" style={{ marginRight: 2 }}><path d="M0 6l5-6 5 6z" fill="#f4f0e6" /></svg>
          <svg width="16" height="14" viewBox="0 0 16 14"><path d="M0 11h2v3H0zM3 9h2v5H3zM6 7h2v7H6zM9 4h2v10H9zM12 0h2v14h-2z" fill="#fff" /></svg>
          <svg width="10" height="15" viewBox="0 0 10 15"><path d="M0 5h3l5-5v15L3 10H0z" fill="#f4f4f4" /></svg>
          <ImeBox>五</ImeBox>
          <Clock>20:52</Clock>
          <DateText>2021/1/8</DateText>
          <Watermark>UG爱好者论坛@千帆xf</Watermark>
        </Tray>
      </Taskbar>
    </Page>
  );
}
